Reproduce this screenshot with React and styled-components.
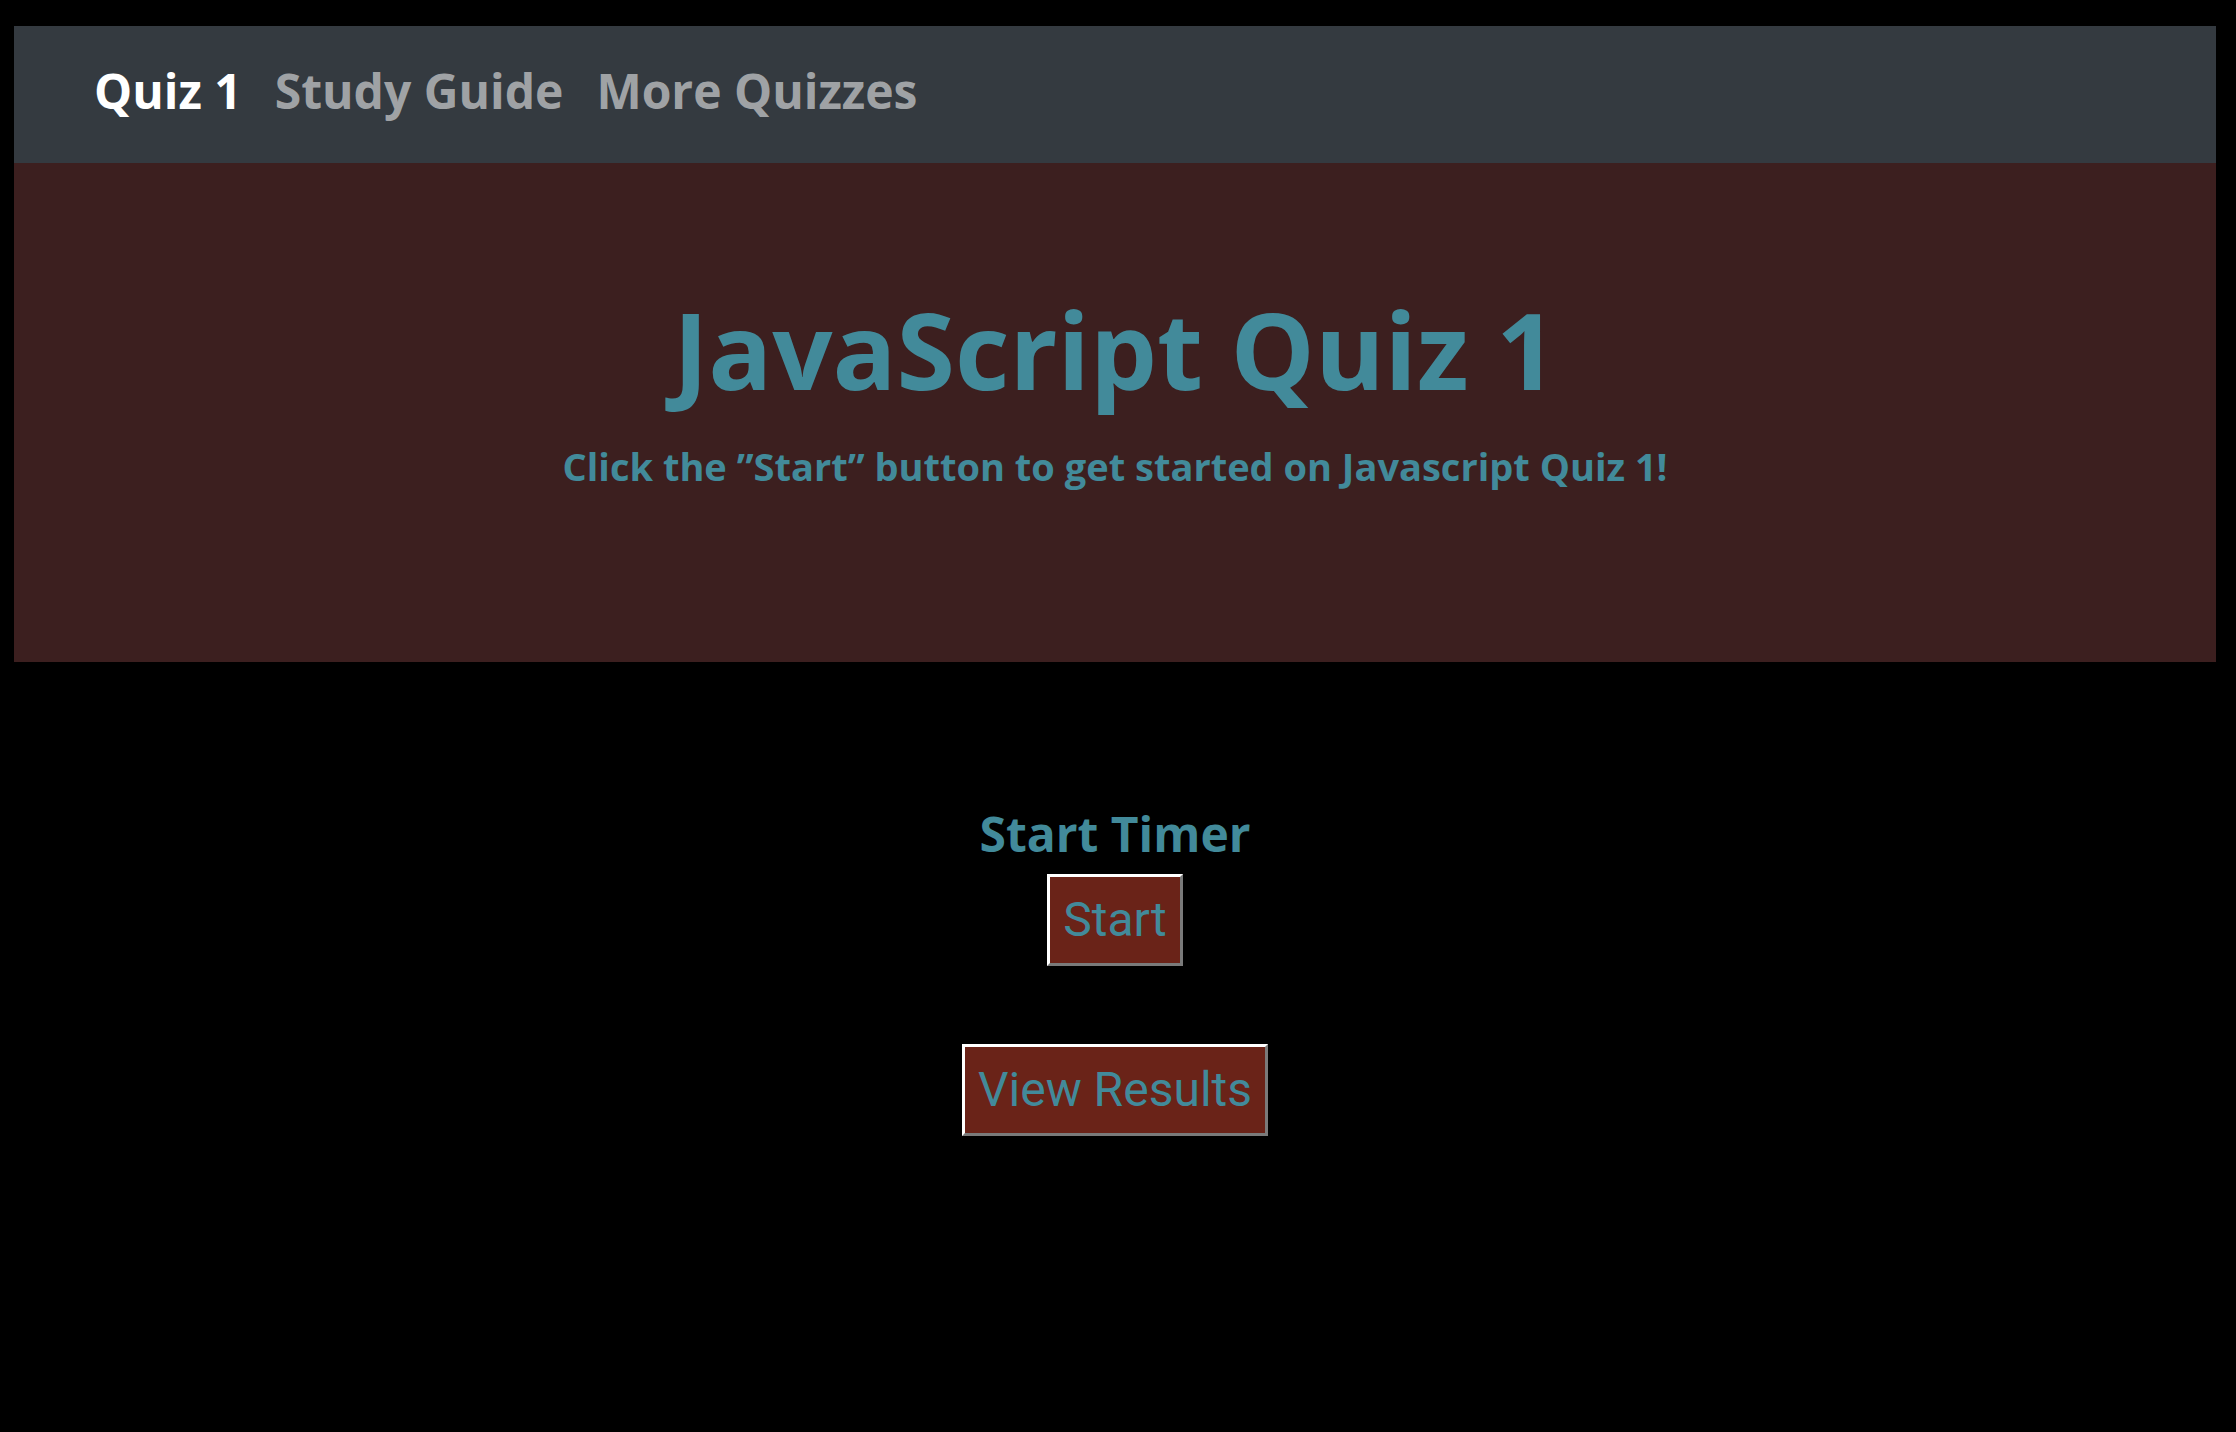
import React from 'react';
import styled, { createGlobalStyle } from 'styled-components';

const GlobalStyle = createGlobalStyle`
  html, body {
    margin: 0;
    padding: 0;
    background: #000;
  }
  body {
    font-family: "Open Sans", Lato, sans-serif;
    min-height: 1432px;
  }
`;

const Page = styled.div`
  padding: 26px 20px 0 14px;
`;

const NavBar = styled.nav`
  display: flex;
  align-items: center;
  gap: 33px;
  height: 137px;
  box-sizing: border-box;
  padding: 0 0 7px 80px;
  background: #343a40;
`;

const NavLink = styled.a`
  font-size: 48px;
  line-height: 1.2;
  font-weight: 700;
  text-decoration: none;
  color: ${({ active }) => (active ? '#ffffff' : 'rgba(255, 255, 255, 0.55)')};
  cursor: pointer;
`;

const Hero = styled.header`
  display: flex;
  flex-direction: column;
  align-items: center;
  height: 499px;
  box-sizing: border-box;
  padding-top: 123px;
  background: #3c1f1f;
  color: #428a9a;
`;

const Title = styled.h1`
  margin: 0;
  font-size: 106px;
  line-height: 1.2;
  font-weight: 700;
`;

const Lead = styled.p`
  margin: 31px 0 0;
  font-size: 38px;
  line-height: 1.2;
  font-weight: 700;
`;

const Main = styled.main`
  display: flex;
  flex-direction: column;
  align-items: center;
  padding-top: 143px;
`;

const TimerLabel = styled.h2`
  margin: 0 0 11px;
  font-size: 48px;
  line-height: 1.2;
  font-weight: 700;
  color: #428a9a;
`;

const Button = styled.button`
  font-family: Roboto, "Liberation Sans", sans-serif;
  font-size: 48px;
  line-height: 56px;
  padding: 15px 13px;
  margin-bottom: ${({ gapBelow }) => gapBelow || 0}px;
  background: #6a2318;
  color: #428a9a;
  border: 3px solid;
  border-color: #ffffff #7a7a7a #7a7a7a #ffffff;
  cursor: pointer;
`;

const App = () => {
  return (
    <Page>
      <GlobalStyle />
      <NavBar>
        <NavLink active>Quiz 1</NavLink>
        <NavLink>Study Guide</NavLink>
        <NavLink>More Quizzes</NavLink>
      </NavBar>
      <Hero>
        <Title>JavaScript Quiz 1</Title>
        <Lead>Click the ”Start” button to get started on Javascript Quiz 1!</Lead>
      </Hero>
      <Main>
        <TimerLabel>Start Timer</TimerLabel>
        <Button gapBelow={78}>Start</Button>
        <Button>View Results</Button>
      </Main>
    </Page>
  );
};

export default App;
